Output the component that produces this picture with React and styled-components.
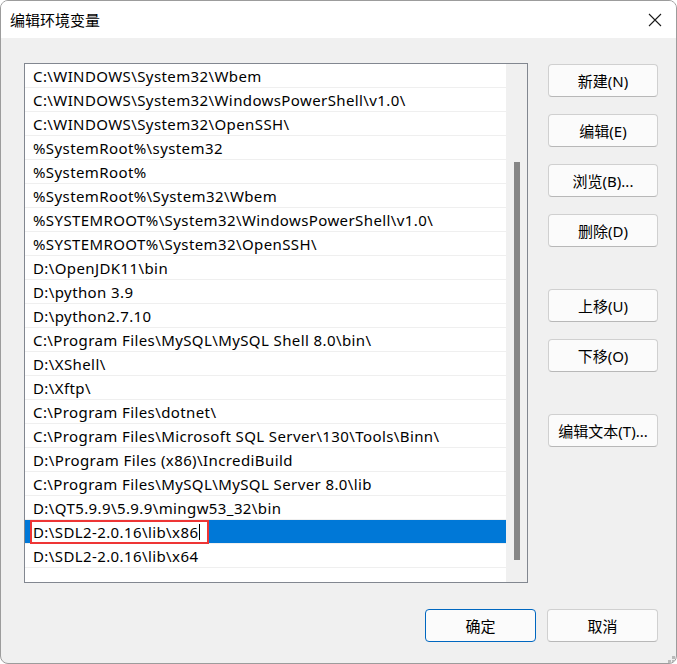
import styled, { createGlobalStyle } from 'styled-components';

const GlobalStyle = createGlobalStyle`
  html, body {
    margin: 0;
    padding: 0;
    background: #ffffff;
    overflow: hidden;
  }
  * {
    box-sizing: border-box;
  }
`;

const paths = [
  'C:\\WINDOWS\\System32\\Wbem',
  'C:\\WINDOWS\\System32\\WindowsPowerShell\\v1.0\\',
  'C:\\WINDOWS\\System32\\OpenSSH\\',
  '%SystemRoot%\\system32',
  '%SystemRoot%',
  '%SystemRoot%\\System32\\Wbem',
  '%SYSTEMROOT%\\System32\\WindowsPowerShell\\v1.0\\',
  '%SYSTEMROOT%\\System32\\OpenSSH\\',
  'D:\\OpenJDK11\\bin',
  'D:\\python 3.9',
  'D:\\python2.7.10',
  'C:\\Program Files\\MySQL\\MySQL Shell 8.0\\bin\\',
  'D:\\XShell\\',
  'D:\\Xftp\\',
  'C:\\Program Files\\dotnet\\',
  'C:\\Program Files\\Microsoft SQL Server\\130\\Tools\\Binn\\',
  'D:\\Program Files (x86)\\IncrediBuild',
  'C:\\Program Files\\MySQL\\MySQL Server 8.0\\lib',
  'D:\\QT5.9.9\\5.9.9\\mingw53_32\\bin',
  'D:\\SDL2-2.0.16\\lib\\x86',
  'D:\\SDL2-2.0.16\\lib\\x64',
];

const EDITING = 19;

const Window = styled.div`
  width: 677px;
  height: 664px;
  display: flex;
  flex-direction: column;
  background: #f0f0f0;
  border: 1px solid #9c9c9c;
  border-radius: 8px;
  overflow: hidden;
  position: relative;
  font-family: 'Noto Sans', 'Noto Sans CJK SC', sans-serif;
  font-size: 15px;
  color: #000;
`;

const TitleBar = styled.div`
  height: 37px;
  flex-shrink: 0;
  background: #ffffff;
  display: flex;
  align-items: center;
  justify-content: space-between;
  padding: 0 14px 0 9px;
`;

const Title = styled.span`
  font-family: 'Noto Sans CJK SC', sans-serif;
  font-size: 15px;
  color: #000;
`;

const CloseBtn = styled.div`
  width: 14px;
  height: 14px;
  display: flex;
  align-items: center;
  justify-content: center;
`;

const Body = styled.div`
  flex: 1;
  padding: 25px 18px 0 23px;
  display: flex;
  flex-direction: column;
`;

const Main = styled.div`
  display: flex;
  gap: 20px;
`;

const ListBox = styled.div`
  width: 504px;
  height: 520px;
  border: 1px solid #828790;
  background: #ffffff;
  display: flex;
`;

const Rows = styled.div`
  flex: 1;
  display: flex;
  flex-direction: column;
  overflow: hidden;
`;

const Row = styled.div`
  height: 24px;
  flex-shrink: 0;
  border-bottom: 1px solid #efefef;
  display: flex;
  align-items: center;
  padding-left: ${p => (p.$editing ? 5 : 8)}px;
  background: ${p => (p.$editing ? '#0078d7' : 'transparent')};
  white-space: nowrap;
  letter-spacing: 0.4px;
`;

const EditBox = styled.div`
  width: 179px;
  height: 24px;
  margin-top: 1px;
  border: 2px solid #ee3535;
  background: #ffffff;
  display: flex;
  align-items: center;
  padding-left: 1px;
`;

const Caret = styled.span`
  width: 1px;
  height: 16px;
  background: #000;
  margin-left: 1px;
`;

const ScrollTrack = styled.div`
  width: 21px;
  background: #f0f0f0;
  padding: 98px 0 0 8px;
`;

const Thumb = styled.div`
  width: 6px;
  height: 398px;
  background: #868686;
`;

const Side = styled.div`
  display: flex;
  flex-direction: column;
  gap: 42px;
  margin-top: 1px;
`;

const Group = styled.div`
  display: flex;
  flex-direction: column;
  gap: 17px;
`;

const Button = styled.button`
  width: ${p => p.$w || 110}px;
  height: 33px;
  background: #fbfbfb;
  border: 1px solid ${p => (p.$primary ? '#0067c0' : '#d0d0d0')};
  border-bottom-color: ${p => (p.$primary ? '#0067c0' : '#b8b8b8')};
  border-radius: 4px;
  font-family: 'Noto Sans', 'Noto Sans CJK SC', sans-serif;
  font-size: 15px;
  color: #000;
  padding: 0;
  display: flex;
  align-items: center;
  justify-content: center;
`;

const Footer = styled.div`
  margin-top: 26px;
  display: flex;
  justify-content: flex-end;
  gap: 11px;
`;

const Grip = styled.div`
  position: absolute;
  right: 1px;
  bottom: 1px;
  width: 11px;
  height: 11px;
`;

const CloseIcon = () => (
  <svg width="14" height="14" viewBox="0 0 14 14">
    <path d="M1 1 L13 13 M13 1 L1 13" stroke="#1b1b1b" strokeWidth="1.1" />
  </svg>
);

const GripIcon = () => (
  <svg width="11" height="11" viewBox="0 0 11 11">
    {[[8, 0], [4, 4], [8, 4], [0, 8], [4, 8], [8, 8]].map(([x, y]) => (
      <rect key={`${x}-${y}`} x={x} y={y} width="3" height="3" fill="#b9b9b9" />
    ))}
  </svg>
);

export default function App() {
  return (
    <>
      <GlobalStyle />
      <Window>
        <TitleBar>
          <Title>编辑环境变量</Title>
          <CloseBtn>
            <CloseIcon />
          </CloseBtn>
        </TitleBar>
        <Body>
          <Main>
            <ListBox>
              <Rows>
                {paths.map((p, i) =>
                  i === EDITING ? (
                    <Row key={p} $editing>
                      <EditBox>
                        {p}
                        <Caret />
                      </EditBox>
                    </Row>
                  ) : (
                    <Row key={p}>{p}</Row>
                  )
                )}
              </Rows>
              <ScrollTrack>
                <Thumb />
              </ScrollTrack>
            </ListBox>
            <Side>
              <Group>
                <Button>新建(N)</Button>
                <Button>编辑(E)</Button>
                <Button>浏览(B)...</Button>
                <Button>删除(D)</Button>
              </Group>
              <Group>
                <Button>上移(U)</Button>
                <Button>下移(O)</Button>
              </Group>
              <Group>
                <Button>编辑文本(T)...</Button>
              </Group>
            </Side>
          </Main>
          <Footer>
            <Button $primary $w={111}>确定</Button>
            <Button $w={111}>取消</Button>
          </Footer>
        </Body>
        <Grip>
          <GripIcon />
        </Grip>
      </Window>
    </>
  );
}
